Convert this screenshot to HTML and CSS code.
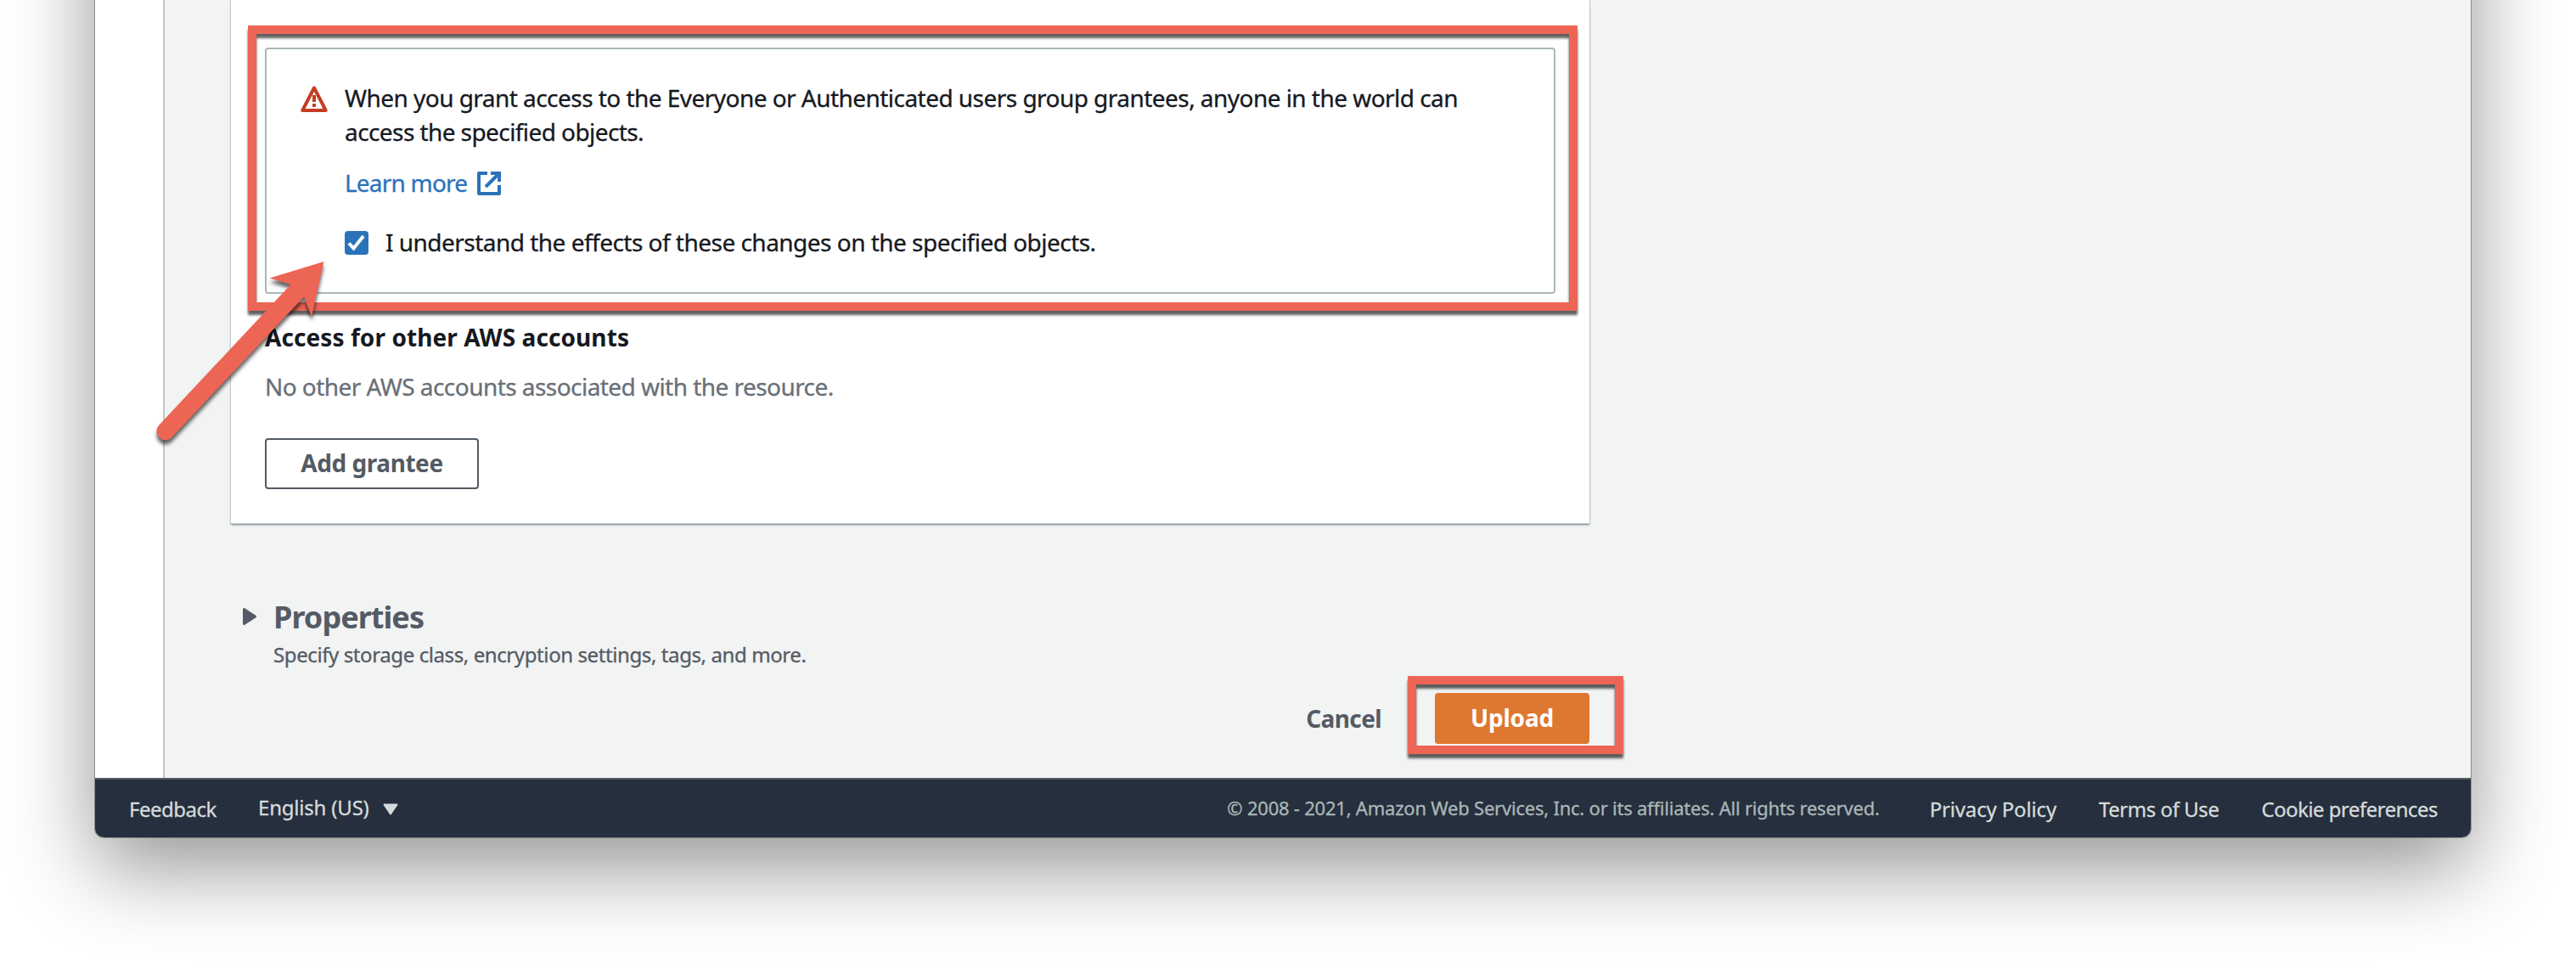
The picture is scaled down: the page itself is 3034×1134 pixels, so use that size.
FILE: index.html
```html
<!DOCTYPE html>
<html lang="en">
<head>
<meta charset="utf-8">
<title>Upload objects</title>
<link rel="stylesheet" href="styles.css">
</head>
<body>
<div class="window">
  <div class="main">
    <aside class="sidebar"></aside>
    <main class="content">
      <section class="card">
        <div class="alert">
          <svg class="alert-icon" viewBox="0 0 32 32"><path d="M16 3.5 2.3 30h27.4z" fill="none" stroke="#c43d21" stroke-width="4" stroke-linejoin="round"/><path d="M14 12h4v8h-4zM14 22h4v4h-4z" fill="#c43d21"/></svg>
          <div class="alert-body">
            <p class="alert-text"><span class="line-a">When you grant access to the Everyone or Authenticated users group grantees, anyone in the world can</span><br><span class="line-b">access the specified objects.</span></p>
            <a class="learn">Learn more<svg class="external" viewBox="0 0 28 28" fill="none" stroke="#2b73b9" stroke-width="4"><path d="M12 2H2v24h24V16" stroke-linejoin="round"/><path d="M16 2h10v10M26 2 10 18"/></svg></a>
            <label class="confirm"><svg class="check" viewBox="0 0 28 28"><rect width="28" height="28" rx="4" fill="#2b73b9"/><path d="m5 14.5 5.5 6L22 6" fill="none" stroke="#fff" stroke-width="4"/></svg><span>I understand the effects of these changes on the specified objects.</span></label>
          </div>
          <div class="highlight highlight-alert"></div>
        </div>
        <h3 class="accounts-title">Access for other AWS accounts</h3>
        <p class="accounts-empty">No other AWS accounts associated with the resource.</p>
        <button class="btn btn-normal">Add grantee</button>
      </section>
      <section class="properties">
        <svg class="caret" viewBox="0 0 16 20"><path d="M1.5 1.5v17L14.500 10z" fill="#545b64" stroke="#545b64" stroke-width="3" stroke-linejoin="round"/></svg>
        <div>
          <h2 class="properties-title">Properties</h2>
          <p class="properties-text">Specify storage class, encryption settings, tags, and more.</p>
        </div>
      </section>
      <div class="actions">
        <span class="cancel">Cancel</span>
        <div class="upload-wrap"><button class="btn btn-primary">Upload</button><div class="highlight highlight-upload"></div></div>
      </div>
    </main>
  </div>
  <footer class="footer">
    <span class="feedback">Feedback</span>
    <span class="language">English (US)<svg class="down" viewBox="0 0 18 14"><path d="M1.500 1.500h15L9 12.500z" fill="#d5dbdb" stroke="#d5dbdb" stroke-width="2" stroke-linejoin="round"/></svg></span>
    <span class="copyright">© 2008 - 2021, Amazon Web Services, Inc. or its affiliates. All rights reserved.</span>
    <span class="privacy">Privacy Policy</span>
    <span class="terms">Terms of Use</span>
    <span class="cookies">Cookie preferences</span>
  </footer>
</div>
<svg class="arrow" viewBox="0 0 220 240"><path d="M201.500 18 137.500 37.500 162.500 45 6.500 211.500A10.500 10.500 0 0 0 22 225.500L178 59.500 187 83z" fill="#ed6555"/></svg>
</body>
</html>
```
FILE: styles.css
```css
* { box-sizing: border-box; margin: 0; }
html, body { height: 1134px; overflow: hidden; background: #fff; }
body { position: relative; font-family: "Noto Sans", "Open Sans", sans-serif; font-size: 28px; line-height: 40px; color: #16191f; }

.window {
  display: flex;
  flex-direction: column;
  width: 2798px;
  height: 1186px;
  margin: -200px 0 0 112px;
  padding-top: 200px;
  background: #fff;
  border-radius: 10px;
  box-shadow: 0 0 0 1px rgba(0, 0, 0, .3), 0 35px 100px rgba(0, 0, 0, .43);
}
.main { display: flex; height: 916px; }
.sidebar { width: 80px; }
.content { flex: 1; padding-left: 78px; border-left: 2px solid #c0c6cb; background: #f2f3f3; }

.card {
  width: 1600px;
  height: 616px;
  padding: 56px 40px 0;
  background: #fff;
  box-shadow: 0 0 0 1px #c3c9cd, 0 2px 2px #6f7880;
}
.alert {
  position: relative;
  display: flex;
  gap: 20px;
  height: 290px;
  padding: 37px 40px 0;
  border: 2px solid #aab7b8;
  border-radius: 4px;
}
.alert-icon { width: 32px; height: 32px; margin-top: 5px; }
.alert-text { white-space: nowrap; }
.alert-body, .accounts-empty, .properties-text, .footer { -webkit-text-stroke: .3px currentColor; }
.line-a { letter-spacing: -.54px; }
.line-b { letter-spacing: -.58px; }
.learn { display: flex; align-items: center; gap: 12px; margin-top: 20px; color: #2b73b9; letter-spacing: -.8px; }
.external { width: 28px; height: 28px; margin-top: 2px; }
.confirm { display: flex; align-items: center; gap: 20px; margin-top: 30px; letter-spacing: -.52px; }
.check { width: 28px; height: 28px; margin-top: 2px; }

.highlight { position: absolute; border: 10px solid #ed6555; filter: drop-shadow(0 5px 1.500px rgba(0, 0, 0, .62)); }
.highlight-alert { left: -22px; top: -28px; width: 1566px; height: 336px; }
.highlight-upload { left: -32px; top: -20px; width: 254px; height: 92px; }

.accounts-title { margin-top: 31px; font-size: 28px; font-weight: 700; letter-spacing: .08px; }
.accounts-empty { margin-top: 18px; color: #687078; letter-spacing: -.55px; }
.btn { display: block; height: 60px; padding: 0 40px 2px; border-radius: 4px; font: 700 28px/54px "Noto Sans", "Open Sans", sans-serif; white-space: nowrap; }
.btn-normal { width: 252px; margin-top: 41px; border: 2px solid #545b64; background: #fff; color: #545b64; letter-spacing: -.45px; }
.btn-primary { width: 182px; border: 2px solid #de7730; background: #de7730; color: #fff; letter-spacing: -.2px; }

.properties { display: flex; margin: 88px 0 0 14px; color: #545b64; }
.caret { width: 16px; height: 20px; margin: 12px 18px 0 0; }
.properties-title { padding: 1px 0 0 2px; font-size: 36px; line-height: 44px; letter-spacing: -.95px; }
.properties-text { margin-top: 4px; padding-left: 2px; font-size: 24px; line-height: 36px; letter-spacing: -.4px; }
.actions { display: flex; justify-content: flex-end; align-items: center; width: 1600px; margin-top: 27px; }
.cancel { margin: 0 63px 0 0; font-weight: 700; color: #545b64; letter-spacing: -.6px; }
.upload-wrap { position: relative; }

.footer {
  display: flex;
  height: 70px;
  padding: 15px 39px 0 40px;
  border-top: 2px solid #545b64;
  border-radius: 0 0 10px 10px;
  background: #262f3d;
  color: #d5dbdb;
  font-size: 24px;
  white-space: nowrap;
}
.feedback { width: 152px; letter-spacing: -.5px; }
.language { margin-top: -2px; letter-spacing: -.2px; }
.down { width: 18px; height: 14px; margin-left: 16px; }
.copyright { margin: -2px 59px 0 auto; font-size: 22px; letter-spacing: -.22px; color: #aab7b8; }
.privacy { margin-right: 50px; letter-spacing: -.15px; }
.terms { margin-right: 50px; letter-spacing: -.45px; }
.cookies { letter-spacing: -.52px; }

.arrow { position: absolute; left: 180px; top: 290px; width: 220px; height: 240px; filter: drop-shadow(0 5px 2px rgba(0, 0, 0, .6)); }
```
